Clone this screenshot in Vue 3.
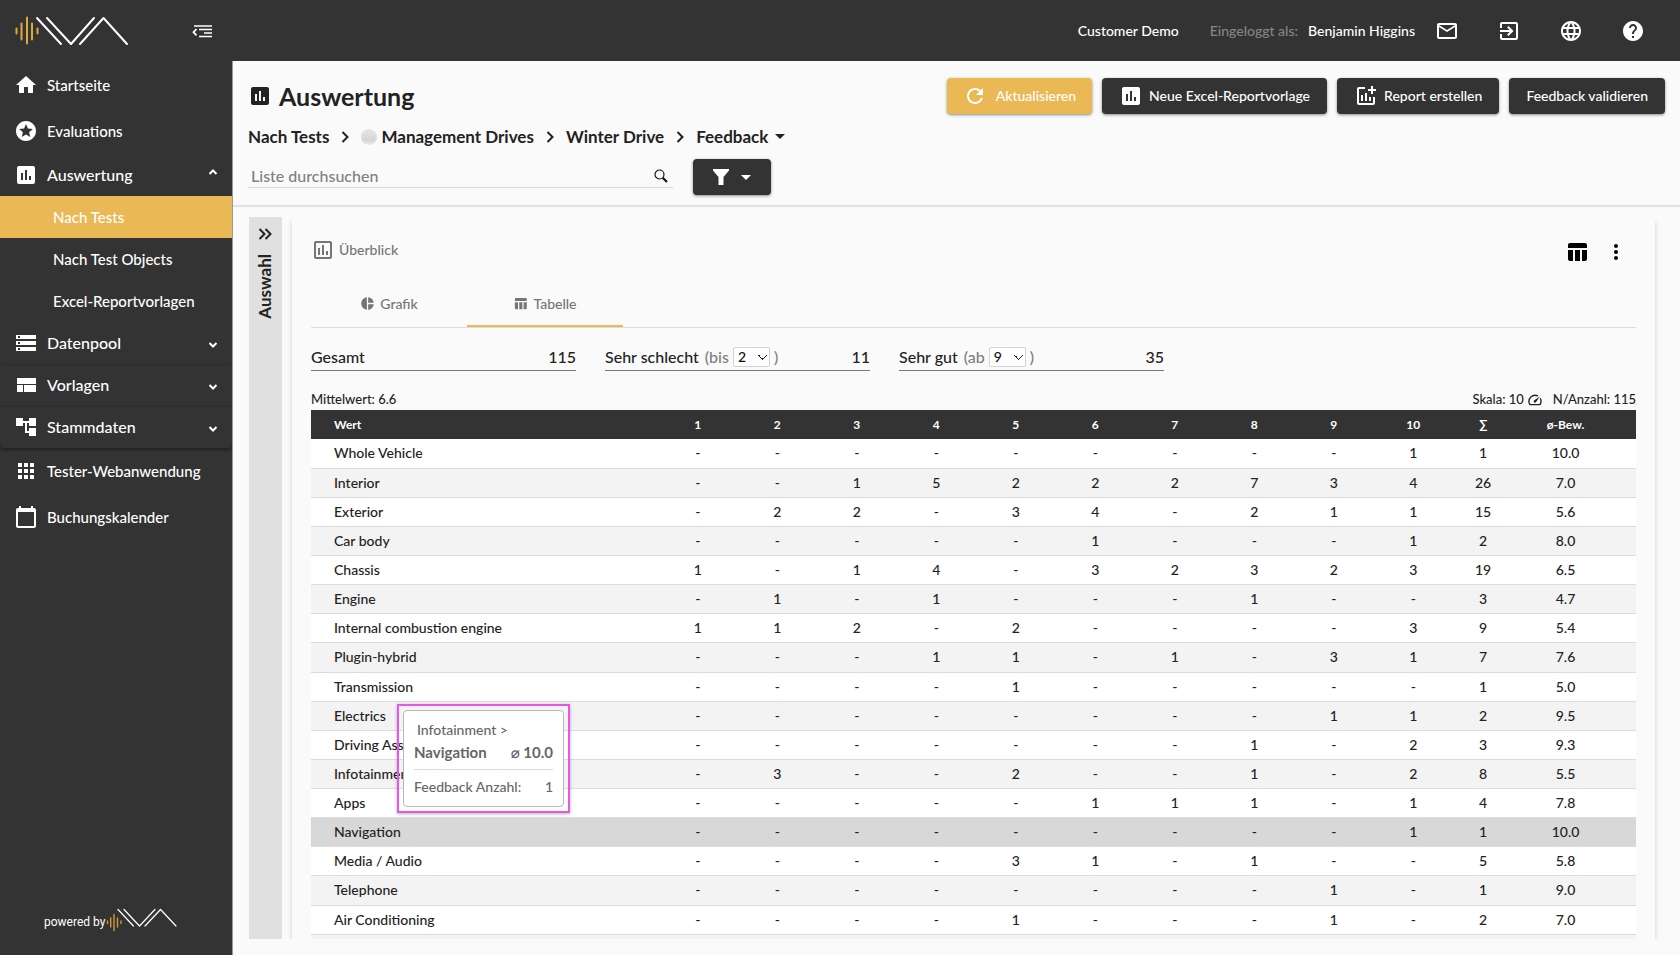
<script setup>
import { ref } from 'vue'

const icons = {
  home: 'M10 20v-6h4v6h5v-8h3L12 3 2 12h3v8z',
  stars: 'M11.99 2C6.47 2 2 6.48 2 12s4.47 10 9.99 10C17.52 22 22 17.52 22 12S17.52 2 11.99 2zm4.24 16L12 15.45 7.77 18l1.12-4.81-3.73-3.23 4.92-.42L12 5l1.92 4.53 4.92.42-3.73 3.23L16.23 18z',
  chart: 'M19 3H5c-1.1 0-2 .9-2 2v14c0 1.1.9 2 2 2h14c1.1 0 2-.9 2-2V5c0-1.1-.9-2-2-2zM9 17H7v-7h2v7zm4 0h-2V7h2v10zm4 0h-2v-4h2v4z',
  chartOutline: 'M9 17H7v-7h2v7zm4 0h-2V7h2v10zm4 0h-2v-4h2v4zm2 2H5V5h14v14zm0-16H5c-1.1 0-2 .9-2 2v14c0 1.1.9 2 2 2h14c1.1 0 2-.9 2-2V5c0-1.1-.9-2-2-2z',
  storage: 'M2 20h20v-4H2v4zm2-3h2v2H4v-2zM2 4v4h20V4H2zm4 3H4V5h2v2zm-4 7h20v-4H2v4zm2-3h2v2H4v-2z',
  layout: 'M3 5h19v6H3zM3 12h6v7H3zM10 12h12v7H10z',
  tree: 'M22 11V3h-7v3H9V3H2v8h7V8h2v10h4v3h7v-8h-7v3h-2V8h2v3z',
  apps: 'M4 8h4V4H4v4zm6 12h4v-4h-4v4zm-6 0h4v-4H4v4zm0-6h4v-4H4v4zm6 0h4v-4h-4v4zm6-10v4h4V4h-4zm-6 4h4V4h-4v4zm6 6h4v-4h-4v4zm0 6h4v-4h-4v4z',
  calendar: 'M20 3h-1V1h-2v2H7V1H5v2H4c-1.1 0-2 .9-2 2v16c0 1.1.9 2 2 2h16c1.1 0 2-.9 2-2V5c0-1.1-.9-2-2-2zm0 18H4V7h16v14z',
  mail: 'M20 4H4c-1.1 0-1.99.9-1.99 2L2 18c0 1.1.9 2 2 2h16c1.1 0 2-.9 2-2V6c0-1.1-.9-2-2-2zm0 14H4V8l8 5 8-5v10zm-8-7L4 6h16l-8 5z',
  exit: 'M10.09 15.59L11.5 17l5-5-5-5-1.41 1.41L12.67 11H3v2h9.67l-2.58 2.59zM19 3H5c-1.11 0-2 .9-2 2v4h2V5h14v14H5v-4H3v4c0 1.1.89 2 2 2h14c1.1 0 2-.9 2-2V5c0-1.1-.9-2-2-2z',
  globe: 'M11.99 2C6.47 2 2 6.48 2 12s4.47 10 9.99 10C17.52 22 22 17.52 22 12S17.52 2 11.99 2zm6.93 6h-2.95a15.65 15.65 0 0 0-1.38-3.56A8.03 8.03 0 0 1 18.92 8zM12 4.04c.83 1.2 1.48 2.53 1.91 3.96h-3.82c.43-1.43 1.08-2.76 1.91-3.96zM4.26 14C4.1 13.36 4 12.69 4 12s.1-1.36.26-2h3.38c-.08.66-.14 1.32-.14 2s.06 1.34.14 2H4.26zm.82 2h2.95c.32 1.25.78 2.45 1.38 3.56A7.99 7.99 0 0 1 5.08 16zm2.95-8H5.08a7.99 7.99 0 0 1 4.33-3.56A15.65 15.65 0 0 0 8.03 8zM12 19.96c-.83-1.2-1.48-2.53-1.91-3.96h3.82c-.43 1.43-1.08 2.76-1.91 3.96zM14.34 14H9.66c-.09-.66-.16-1.32-.16-2s.07-1.35.16-2h4.68c.09.65.16 1.32.16 2s-.07 1.34-.16 2zm.25 5.56c.6-1.11 1.06-2.31 1.38-3.56h2.95a8.03 8.03 0 0 1-4.33 3.56zM16.36 14c.08-.66.14-1.32.14-2s-.06-1.34-.14-2h3.38c.16.64.26 1.31.26 2s-.1 1.36-.26 2h-3.38z',
  help: 'M12 2C6.48 2 2 6.48 2 12s4.48 10 10 10 10-4.48 10-10S17.52 2 12 2zm1 17h-2v-2h2v2zm2.07-7.75l-.9.92C13.45 12.9 13 13.5 13 15h-2v-.5c0-1.1.45-2.1 1.17-2.83l1.24-1.26c.37-.36.59-.86.59-1.41 0-1.1-.9-2-2-2s-2 .9-2 2H8c0-2.21 1.79-4 4-4s4 1.79 4 4c0 .88-.36 1.68-.93 2.25z',
  refresh: 'M17.65 6.35A7.958 7.958 0 0 0 12 4c-4.42 0-7.99 3.58-7.99 8s3.57 8 7.99 8c3.73 0 6.84-2.55 7.73-6h-2.08A5.99 5.99 0 0 1 12 18c-3.31 0-6-2.69-6-6s2.69-6 6-6c1.66 0 3.14.69 4.22 1.78L13 11h7V4l-2.35 2.35z',
  addChart: 'M22 5v2h-3v3h-2V7h-3V5h3V2h2v3h3zm-3 14H5V5h6V3H5c-1.1 0-2 .9-2 2v14c0 1.1.9 2 2 2h14c1.1 0 2-.9 2-2v-6h-2v6zm-4-6v4h2v-4h-2zm-4 4h2V9h-2v8zm-2 0v-6H7v6h2z',
  table: 'M10 10.02h5V21h-5V10.02zM17 21h3c1.1 0 2-.9 2-2v-9h-5v11zm3-18H5c-1.1 0-2 .9-2 2v3h19V5c0-1.1-.9-2-2-2zM3 19c0 1.1.9 2 2 2h3V10H3v9z',
  pie: 'M11 2v20c-5.07-.5-9-4.79-9-10s3.93-9.5 9-10zm2.03 0v8.99H22c-.47-4.74-4.24-8.52-8.97-8.99zm0 11.01V22c4.74-.47 8.5-4.25 8.97-8.99h-8.97z',
  more: 'M12 8c1.1 0 2-.9 2-2s-.9-2-2-2-2 .9-2 2 .9 2 2 2zm0 2c-1.1 0-2 .9-2 2s.9 2 2 2 2-.9 2-2-.9-2-2-2zm0 6c-1.1 0-2 .9-2 2s.9 2 2 2 2-.9 2-2-.9-2-2-2z',
  speed: 'M20.38 8.57l-1.23 1.85a8 8 0 0 1-.22 7.58H5.07A8 8 0 0 1 15.58 6.85l1.85-1.23A10 10 0 0 0 3.35 19a2 2 0 0 0 1.72 1h13.85a2 2 0 0 0 1.74-1 10 10 0 0 0-.27-10.44zm-9.79 6.84a2 2 0 0 0 2.83 0l5.66-8.49-8.49 5.66a2 2 0 0 0 0 2.83z',
}

const nav = [
  { label: 'Startseite', icon: 'home' },
  { label: 'Evaluations', icon: 'stars' },
  {
    label: 'Auswertung', icon: 'chart', group: true, open: true,
    children: ['Nach Tests', 'Nach Test Objects', 'Excel-Reportvorlagen'],
  },
  { label: 'Datenpool', icon: 'storage', group: true },
  { label: 'Vorlagen', icon: 'layout', group: true },
  { label: 'Stammdaten', icon: 'tree', group: true, last: true },
  { label: 'Tester-Webanwendung', icon: 'apps' },
  { label: 'Buchungskalender', icon: 'calendar' },
]

const userActions = [
  { label: 'Nachrichten', icon: 'mail' },
  { label: 'Abmelden', icon: 'exit' },
  { label: 'Sprache', icon: 'globe' },
  { label: 'Hilfe', icon: 'help' },
]

const low = ref('2')
const high = ref('9')
const query = ref('')
const scale = ['1', '2', '3', '4', '5', '6', '7', '8', '9', '10']

const rows = [
  ['Whole Vehicle', '- - - - - - - - - 1', '1', '10.0'],
  ['Interior', '- - 1 5 2 2 2 7 3 4', '26', '7.0'],
  ['Exterior', '- 2 2 - 3 4 - 2 1 1', '15', '5.6'],
  ['Car body', '- - - - - 1 - - - 1', '2', '8.0'],
  ['Chassis', '1 - 1 4 - 3 2 3 2 3', '19', '6.5'],
  ['Engine', '- 1 - 1 - - - 1 - -', '3', '4.7'],
  ['Internal combustion engine', '1 1 2 - 2 - - - - 3', '9', '5.4'],
  ['Plugin-hybrid', '- - - 1 1 - 1 - 3 1', '7', '7.6'],
  ['Transmission', '- - - - 1 - - - - -', '1', '5.0'],
  ['Electrics', '- - - - - - - - 1 1', '2', '9.5'],
  ['Driving Assistance', '- - - - - - - 1 - 2', '3', '9.3'],
  ['Infotainment', '- 3 - - 2 - - 1 - 2', '8', '5.5'],
  ['Apps', '- - - - - 1 1 1 - 1', '4', '7.8'],
  ['Navigation', '- - - - - - - - - 1', '1', '10.0'],
  ['Media / Audio', '- - - - 3 1 - 1 - -', '5', '5.8'],
  ['Telephone', '- - - - - - - - 1 -', '1', '9.0'],
  ['Air Conditioning', '- - - - 1 - - - 1 -', '2', '7.0'],
].map(([name, counts, sum, avg]) => ({ name, counts: counts.split(' '), sum, avg }))
</script>

<template>
  <div class="app">
    <aside class="sidebar">
      <div class="brand">
        <svg class="logo" viewBox="0 0 116 30" width="116" height="30" fill="none" stroke-linecap="round" stroke-linejoin="round" role="img" aria-label="Logo">
          <path d="M2.5 12.500v5M7.500 7.500v16M13 1.500v26M18 7.500v16M23.500 12.500v5" stroke="#e0a93c" stroke-width="2" />
          <path d="M23 2L47 28M33 2l24 26L80 2M66 28L89.500 2L113 28" stroke="#fff" stroke-width="2" />
        </svg>
        <button class="icon-btn" type="button" aria-label="Menü einklappen">
          <svg viewBox="0 0 20 14" width="20" height="14" fill="none" stroke="#fff" stroke-width="2">
            <path d="M2 2h18M7 5.500h13M12 9h8M7 12.500h13" stroke-width="1.700" />
            <path d="M4.500 5L1.500 8.200L4.500 11.400" stroke-width="1.800" />
          </svg>
        </button>
      </div>
      <nav>
        <template v-for="item in nav" :key="item.label">
          <a href="#" class="nav-item" :class="{ group: item.group, last: item.last }">
            <svg viewBox="0 0 24 24" width="24" height="24" fill="#fff"><path :d="icons[item.icon]" /></svg>
            <span>{{ item.label }}</span>
            <svg v-if="item.group" class="arrow" :class="{ open: item.open }" viewBox="0 0 10 8" width="10" height="8" fill="none" stroke="#fff" stroke-width="2"><path d="M1.500 2L5 5.500L8.500 2" /></svg>
          </a>
          <a v-for="(child, i) in item.children" :key="child" href="#" class="nav-sub" :class="{ active: i === 0 }">{{ child }}</a>
        </template>
      </nav>
      <div class="powered">
        <span>powered by</span>
        <svg viewBox="0 0 72 24" width="72" height="24" fill="none" stroke-linecap="round" role="img" aria-label="Logo">
          <path d="M1.500 13v2.500M4.700 10v9M8 6.500v16M11.500 10v9M15 13v2.500" stroke="#cf9b3c" stroke-width="1.400" />
          <path d="M12 1.500L27.500 18M18 1.500L33.500 18L49 1.500M39 18L54.500 1.500L70 18" stroke="#fff" stroke-width="1.200" />
        </svg>
      </div>
    </aside>

    <div class="page">
      <header class="topbar">
        <span>Customer Demo</span>
        <span class="muted">Eingeloggt als:</span>
        <span>Benjamin Higgins</span>
        <div class="top-actions">
          <button v-for="a in userActions" :key="a.icon" class="icon-btn" type="button" :aria-label="a.label">
            <svg viewBox="0 0 24 24" width="24" height="24" fill="#fff"><path :d="icons[a.icon]" /></svg>
          </button>
        </div>
      </header>

      <main class="main">
        <section class="head">
          <div class="head-row">
            <h1>
              <svg viewBox="0 0 24 24" width="24" height="24" fill="#222"><path :d="icons.chart" /></svg>
              Auswertung
            </h1>
            <div class="buttons">
              <button class="btn primary" type="button">
                <svg viewBox="0 0 24 24" width="24" height="24" fill="#fff"><path :d="icons.refresh" /></svg>
                Aktualisieren
              </button>
              <button class="btn" type="button">
                <svg viewBox="0 0 24 24" width="24" height="24" fill="#fff"><path :d="icons.chart" /></svg>
                Neue Excel-Reportvorlage
              </button>
              <button class="btn" type="button">
                <svg viewBox="0 0 24 24" width="24" height="24" fill="#fff"><path :d="icons.addChart" /></svg>
                Report erstellen
              </button>
              <button class="btn" type="button">Feedback validieren</button>
            </div>
          </div>

          <nav class="crumbs" aria-label="Pfad">
            <a href="#">Nach Tests</a>
            <svg class="sep" viewBox="0 0 8 12" width="8" height="12"><path d="M1.500 1L6.500 6L1.500 11" /></svg>
            <a href="#"><i class="dot"></i>Management Drives</a>
            <svg class="sep" viewBox="0 0 8 12" width="8" height="12"><path d="M1.500 1L6.500 6L1.500 11" /></svg>
            <a href="#">Winter Drive</a>
            <svg class="sep" viewBox="0 0 8 12" width="8" height="12"><path d="M1.500 1L6.500 6L1.500 11" /></svg>
            <button class="crumb-menu" type="button">
              Feedback
              <svg viewBox="0 0 10 5" width="10" height="5" fill="#222"><path d="M0 0h10L5 5z" /></svg>
            </button>
          </nav>

          <div class="search-row">
            <label class="search">
              <input v-model="query" type="text" placeholder="Liste durchsuchen" aria-label="Liste durchsuchen" />
              <svg viewBox="0 0 14 14" width="14" height="14" fill="none" stroke="#111"><circle cx="5.500" cy="5.500" r="4.500" stroke-width="1.200" /><path d="M8.700 8.700L13 13" stroke-width="2.200" /></svg>
            </label>
            <button class="btn filter" type="button" aria-label="Filter">
              <svg viewBox="0 0 16 16" width="16" height="16" fill="#fff"><path d="M0 0h16v1.500L10.500 8v8h-5V8L0 1.500z" /></svg>
              <svg viewBox="0 0 10 5" width="10" height="5" fill="#fff"><path d="M0 0h10L5 5z" /></svg>
            </button>
          </div>
        </section>

        <div class="body">
          <button class="drawer" type="button">
            <svg viewBox="0 0 14 12" width="14" height="12" fill="none" stroke="#222" stroke-width="2"><path d="M1.500 1L6.500 6L1.500 11M7.500 1L12.500 6L7.500 11" /></svg>
            <span>Auswahl</span>
          </button>

          <section class="panel">
            <div class="panel-head">
              <h2>
                <svg viewBox="0 0 24 24" width="24" height="24" fill="#757575"><path :d="icons.chartOutline" /></svg>
                Überblick
              </h2>
              <div class="panel-tools">
                <button class="icon-btn" type="button" aria-label="Tabellenansicht">
                  <svg viewBox="0 0 24 24" width="24" height="24" fill="#000"><path :d="icons.table" /></svg>
                </button>
                <button class="icon-btn" type="button" aria-label="Mehr">
                  <svg viewBox="0 0 24 24" width="24" height="24" fill="#000"><path :d="icons.more" /></svg>
                </button>
              </div>
            </div>

            <div class="tabs" role="tablist">
              <button class="tab" type="button" role="tab" aria-selected="false">
                <svg viewBox="0 0 24 24" width="15" height="15" fill="#757575"><path :d="icons.pie" /></svg>Grafik
              </button>
              <button class="tab selected" type="button" role="tab" aria-selected="true">
                <svg viewBox="0 0 24 24" width="15" height="15" fill="#757575"><path :d="icons.table" /></svg>Tabelle
              </button>
            </div>

            <div class="stats">
              <div class="stat"><span>Gesamt</span><b>115</b></div>
              <div class="stat">
                <span>Sehr schlecht</span>
                <label class="hint">(bis
                  <select v-model="low"><option>1</option><option>2</option><option>3</option></select>
                  )</label>
                <b>11</b>
              </div>
              <div class="stat">
                <span>Sehr gut</span>
                <label class="hint">(ab
                  <select v-model="high"><option>8</option><option>9</option><option>10</option></select>
                  )</label>
                <b>35</b>
              </div>
            </div>

            <div class="meta">
              <span>Mittelwert: 6.6</span>
              <span class="meta-right">
                <span>Skala: 10</span>
                <svg viewBox="0 0 24 24" width="16" height="16" fill="#222"><path :d="icons.speed" /></svg>
                <span class="count">N/Anzahl: 115</span>
              </span>
            </div>

            <div class="table-area">
              <div class="table-clip">
                <table>
                  <colgroup>
                    <col />
                    <col v-for="n in scale" :key="n" class="c-num" />
                    <col class="c-sum" />
                    <col class="c-avg" />
                  </colgroup>
                  <thead>
                    <tr>
                      <th scope="col">Wert</th>
                      <th v-for="n in scale" :key="n" scope="col">{{ n }}</th>
                      <th scope="col">∑</th>
                      <th scope="col">ø-Bew.</th>
                    </tr>
                  </thead>
                  <tbody>
                    <tr v-for="row in rows" :key="row.name" :class="{ hover: row.name === 'Navigation' }">
                      <td>{{ row.name }}</td>
                      <td v-for="(c, i) in row.counts" :key="i">{{ c }}</td>
                      <td>{{ row.sum }}</td>
                      <td>{{ row.avg }}</td>
                    </tr>
                    <tr aria-hidden="true"><td colspan="13"></td></tr>
                  </tbody>
                </table>
              </div>
              <div class="tip-frame">
                <div class="tip" role="tooltip">
                  <div class="tip-parent">Infotainment &gt;</div>
                  <div class="tip-line strong"><span>Navigation</span><span>⌀ 10.0</span></div>
                  <hr />
                  <div class="tip-line"><span>Feedback Anzahl:</span><span>1</span></div>
                </div>
              </div>
            </div>
          </section>
        </div>
      </main>
    </div>
  </div>
</template>

<style>
body {
  background: #fafafa;
}
</style>

<style scoped>
* {
  box-sizing: border-box;
}
.app {
  display: flex;
  height: 100vh;
  overflow: hidden;
  font-family: Lato, 'Noto Sans', 'DejaVu Sans', sans-serif;
  font-size: 14px;
  font-weight: 500;
  line-height: 20px;
  color: #222;
}
svg {
  display: block;
  flex: none;
}
button,
select,
input {
  font: inherit;
  color: inherit;
}
button {
  border: 0;
  padding: 0;
  background: none;
  cursor: pointer;
}
a {
  color: inherit;
  text-decoration: none;
}

.sidebar {
  display: flex;
  flex-direction: column;
  flex: none;
  width: 232px;
  background: #333;
  color: #fff;
}
.brand {
  display: flex;
  align-items: center;
  justify-content: space-between;
  height: 62px;
  padding: 0 20px 0 14px;
}
.nav-item {
  display: flex;
  align-items: center;
  gap: 9px;
  height: 46px;
  padding: 0 14px;
  font-size: 15px;
}
.nav-item.group {
  height: 42px;
  border-radius: 4px;
  box-shadow: 0 1px 1px rgba(0, 0, 0, 0.14);
  font-size: 16px;
}
.nav-item.last {
  box-shadow: 0 2px 3px rgba(0, 0, 0, 0.35);
}
.arrow {
  margin: 4px 0 0 auto;
}
.arrow.open {
  margin: 0 0 6px auto;
  transform: rotate(180deg);
}
.nav-sub {
  display: flex;
  align-items: center;
  height: 42px;
  padding-left: 53px;
  font-size: 15px;
}
.nav-sub.active {
  background: #eab855;
}
.powered {
  display: flex;
  align-items: flex-end;
  gap: 1px;
  margin-top: auto;
  padding: 0 0 23px 44px;
  font-family: Roboto, sans-serif;
  font-size: 12px;
  font-weight: 400;
}

.page {
  display: flex;
  flex: 1;
  flex-direction: column;
  min-width: 0;
}
.topbar {
  display: flex;
  align-items: center;
  justify-content: flex-end;
  flex: none;
  height: 61px;
  padding-right: 35px;
  background: #333;
  color: #fff;
}
.topbar .muted {
  margin: 0 10px 0 31px;
  color: #858585;
}
.top-actions {
  display: flex;
  gap: 38px;
  margin-left: 20px;
}
.main {
  display: flex;
  flex: 1;
  flex-direction: column;
  min-height: 0;
  border-left: 1px solid #9a9a9a;
  background: #fafafa;
}
.head {
  flex: none;
  padding: 17px 15px 10px;
  border-bottom: 2px solid #e2e2e2;
}
.head-row {
  display: flex;
  align-items: center;
  justify-content: space-between;
  height: 36px;
}
h1 {
  display: flex;
  align-items: center;
  gap: 7px;
  margin: 0;
  font-size: 25px;
  line-height: 34px;
  font-weight: 700;
}
.buttons {
  display: flex;
  gap: 10px;
}
.btn {
  display: flex;
  align-items: center;
  justify-content: center;
  gap: 6px;
  height: 36px;
  padding: 0 17px;
  border-radius: 4px;
  background: #333;
  color: #fff;
  font-size: 14px;
  box-shadow: 0 1px 3px rgba(0, 0, 0, 0.45);
}
.btn.primary {
  gap: 9px;
  padding: 0 16px;
  background: #eab855;
}
.crumbs {
  display: flex;
  align-items: center;
  gap: 12px;
  height: 45px;
  font-size: 17px;
  font-weight: 700;
}
.crumbs a {
  display: flex;
  align-items: center;
  gap: 4px;
}
.sep {
  fill: none;
  stroke: #222;
  stroke-width: 2;
}
.dot {
  width: 16px;
  height: 16px;
  border-radius: 50%;
  background: linear-gradient(#e6e6e6, #d6d6d6 70%, #ececec);
}
.crumb-menu {
  display: flex;
  align-items: center;
  gap: 7px;
}
.search-row {
  display: flex;
  gap: 20px;
}
.search {
  display: flex;
  align-items: center;
  width: 425px;
  height: 29px;
  padding: 5px 5px 0 3px;
  border-bottom: 1px solid #d8d8d8;
}
.search input {
  flex: 1;
  min-width: 0;
  padding: 0;
  border: 0;
  outline: 0;
  background: none;
  font-size: 16px;
}
.search input::placeholder {
  color: #808080;
  opacity: 1;
}
.filter {
  gap: 12px;
  width: 78px;
}

.body {
  display: flex;
  flex: 1;
  gap: 10px;
  min-height: 0;
  padding: 10px 25px 16px 16px;
}
.drawer {
  display: flex;
  flex-direction: column;
  align-items: center;
  gap: 14px;
  flex: none;
  width: 33px;
  padding: 11px 1px 0 0;
  background: #e0e0e0;
  font-size: 17px;
  font-weight: 700;
}
.drawer span {
  writing-mode: vertical-rl;
  transform: rotate(180deg);
}
.panel {
  display: flex;
  flex: 1;
  flex-direction: column;
  min-width: 0;
  padding: 17px 19px 0;
  border-radius: 4px 4px 0 0;
  box-shadow: 0 4px 5px rgba(0, 0, 0, 0.18);
  clip-path: inset(0 -8px 0 -8px);
}
.panel-head {
  display: flex;
  align-items: center;
  justify-content: space-between;
}
h2 {
  display: flex;
  align-items: center;
  gap: 4px;
  margin: 0;
  font-size: 14px;
  line-height: 32px;
  font-weight: 500;
  color: #757575;
}
.panel-tools {
  display: flex;
  gap: 15px;
  padding: 4px 8px 0 0;
}
.tabs {
  display: flex;
  margin-top: 16px;
  border-bottom: 1px solid #dcdcdc;
}
.tab {
  display: flex;
  align-items: center;
  justify-content: center;
  gap: 5px;
  width: 156px;
  height: 45px;
  border-bottom: 2px solid transparent;
  color: #757575;
  font-size: 14px;
}
.tab.selected {
  border-bottom-color: #eab855;
}
.stats {
  display: flex;
  gap: 29px;
  margin-top: 15px;
}
.stat {
  display: flex;
  align-items: center;
  gap: 6px;
  width: 20%;
  height: 28px;
  border-bottom: 1px solid #777;
  font-size: 16px;
}
.stat b {
  margin-left: auto;
  font-weight: 500;
}
.hint {
  display: flex;
  align-items: center;
  gap: 4px;
  color: #808080;
}
select {
  width: 37px;
  height: 20px;
  padding: 0 0 0 4px;
  border: 1px solid #d4d4d4;
  border-radius: 2px;
  appearance: none;
  background:
    linear-gradient(45deg, transparent 45%, #222 45% 60%, transparent 60%) 24px 7px / 5px 5px no-repeat,
    linear-gradient(-45deg, transparent 45%, #222 45% 60%, transparent 60%) 28px 7px / 5px 5px no-repeat,
    #fff;
  font-size: 14px;
  line-height: 18px;
  color: #111;
}
.meta {
  display: flex;
  justify-content: space-between;
  margin-top: 18px;
  font-size: 13px;
  line-height: 21px;
}
.meta-right {
  display: flex;
  align-items: center;
  gap: 3px;
}
.count {
  margin-left: 7px;
}
.table-area {
  position: relative;
  flex: 1;
  min-height: 0;
}
.table-clip {
  height: 100%;
  overflow: hidden;
}
table {
  width: 100%;
  height: 554px;
  border-collapse: collapse;
  table-layout: fixed;
}
.c-num {
  width: 6%;
}
.c-sum {
  width: 60px;
}
.c-avg {
  width: 123px;
}
th,
td {
  padding: 0;
  font-weight: 500;
  text-align: center;
}
th {
  height: 29px;
  background: #333;
  color: #fff;
  font-size: 12px;
  font-weight: 700;
}
td {
  height: 29px;
  border-bottom: 1px solid #dcdcdc;
  font-size: 14px;
}
th:first-child,
td:first-child {
  padding-left: 23px;
  text-align: left;
}
th:last-child,
td:last-child {
  padding-right: 18px;
}
tbody tr {
  background: #fff;
}
tbody tr:nth-child(even) {
  background: #f3f3f3;
}
tbody tr.hover {
  background: #d8d8d8;
}
.tip-frame {
  position: absolute;
  top: 294px;
  left: 86px;
  width: 173px;
  padding: 4px;
  border: 2px solid #e756ea;
  box-shadow: 0 1px 3px rgba(0, 0, 0, 0.3);
}
.tip {
  padding: 8px 10px;
  border: 1px solid #b8b8b8;
  border-radius: 4px;
  background: #fff;
  color: #666;
  font-size: 14px;
  line-height: 22px;
}
.tip-parent {
  padding-left: 3px;
}
.tip-line {
  display: flex;
  justify-content: space-between;
}
.strong {
  font-size: 15px;
  font-weight: 700;
}
.tip hr {
  margin: 6px 0;
  border: 0;
  border-top: 1px solid #dcdcdc;
}
</style>
